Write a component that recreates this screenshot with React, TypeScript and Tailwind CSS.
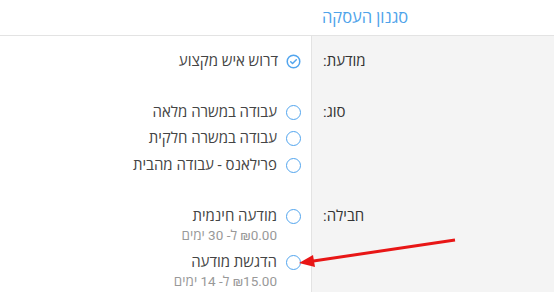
const typeOptions = ['עבודה במשרה מלאה', 'עבודה במשרה חלקית', 'פרילאנס - עבודה מהבית'];

const packages = [
  { name: 'מודעה חינמית', price: '₪0.00 ל- 30 ימים' },
  { name: 'הדגשת מודעה', price: '₪15.00 ל- 14 ימים' },
];

function Radio() {
  return <span className="w-[15px] h-[15px] rounded-full border-[1.6px] border-[#52a5ee] bg-white flex-shrink-0" />;
}

function CheckIcon() {
  return (
    <svg width="15" height="15" viewBox="0 0 16 16" className="flex-shrink-0">
      <circle cx="8" cy="8" r="6.7" fill="none" stroke="#52a5ee" strokeWidth="1.6" />
      <path d="M5 8.2l2 2 4-4" fill="none" stroke="#52a5ee" strokeWidth="1.6" strokeLinecap="round" strokeLinejoin="round" />
    </svg>
  );
}

function Row({ label, children }: { label: string; children: React.ReactNode }) {
  return (
    <div className="flex">
      <div className="w-[243px] flex-shrink-0 bg-[#f4f4f4] border-l border-[#e3e3e3] pt-[15px] pl-[11px] text-left text-[15px] leading-[20px] text-[#333]">
        {label}
      </div>
      <div className="flex-1 pt-[15px] pb-[16px] pr-[10px]">{children}</div>
    </div>
  );
}

export default function App() {
  return (
    <div dir="rtl" className="relative w-[554px] h-[292px] overflow-hidden bg-white font-['Roboto','Open_Sans',sans-serif]">
      <div className="h-[36px] border-b border-[#e3e3e3] flex">
        <div className="w-[243px] flex-shrink-0 pl-[11px] flex items-center justify-end">
          <span className="text-[16.5px] text-[#4ea3ea] leading-[20px]">סגנון העסקה</span>
        </div>
        <div className="flex-1" />
      </div>

      <Row label="מודעת:">
        <div className="flex items-center gap-[8px] h-[20px] text-[15px] text-[#444] whitespace-nowrap">
          <CheckIcon />
          <span>דרוש איש מקצוע</span>
        </div>
      </Row>

      <Row label="סוג:">
        <div className="flex flex-col gap-[6.5px]">
          {typeOptions.map((o) => (
            <div key={o} className="flex items-center gap-[9px] h-[20px] text-[15px] text-[#444] whitespace-nowrap">
              <Radio />
              <span>{o}</span>
            </div>
          ))}
        </div>
      </Row>

      <Row label="חבילה:">
        <div className="flex flex-col gap-[7px]">
          {packages.map((p) => (
            <div key={p.name} className="flex items-start gap-[9px] whitespace-nowrap">
              <div className="h-[20px] flex items-center">
                <Radio />
              </div>
              <div className="flex flex-col">
                <span className="text-[15px] leading-[20px] text-[#444]">{p.name}</span>
                <span className="text-[13.5px] leading-[19px] text-[#999]">{p.price}</span>
              </div>
            </div>
          ))}
        </div>
      </Row>

      <svg className="absolute left-0 top-0 pointer-events-none" width="554" height="292">
        <line x1="455" y1="240" x2="310" y2="261.5" stroke="#e81616" strokeWidth="3" />
        <polygon points="299,263 313,255 315,267" fill="#e81616" />
      </svg>
    </div>
  );
}
